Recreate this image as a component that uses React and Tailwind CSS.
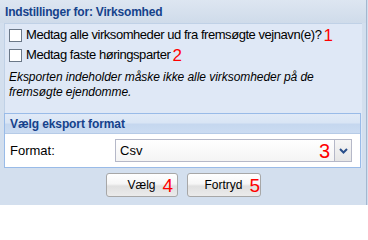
import React from 'react';

const base = { fontFamily: '"Liberation Sans", Arial, sans-serif' };

function Num({ children, className = '' }) {
  return (
    <span className={'text-[#ff0000] leading-none ' + className}>{children}</span>
  );
}

function Check({ label, num }) {
  return (
    <label className="flex items-center h-[20px]">
      <span className="w-[13px] h-[13px] bg-white border border-[#6b7888] shrink-0" />
      <span className="ml-[4px] text-[13px] tracking-[-0.45px] text-black">{label}</span>
      <Num className="ml-[2px] text-[17px]">{num}</Num>
    </label>
  );
}

function Button({ label, num, className = '' }) {
  return (
    <button
      className={
        'h-[24px] rounded-[3px] border border-[#a7a7a7] flex items-center justify-center text-[12px] text-black bg-[linear-gradient(to_bottom,#ffffff_0%,#f6f6f6_45%,#e0e0e0_55%,#ebebeb_100%)] ' +
        className
      }
    >
      <span className="relative">
        {label}
        <Num className="absolute left-full top-1/2 -translate-y-1/2 ml-[7px] text-[19px]">{num}</Num>
      </span>
    </button>
  );
}

export default function App() {
  return (
    <div className="w-[368px] h-[205px] bg-[#d3dfee] overflow-hidden" style={base}>
      <div className="w-[367px] h-[205px] border-r border-[#a3b8d0] flex flex-col">
        <div className="h-[23px] px-[5px] flex items-center bg-[linear-gradient(to_bottom,#dde6f1,#cfdbea)]">
          <span className="text-[12px] font-bold tracking-[-0.2px] text-[#15428b]">Indstillinger for: Virksomhed</span>
        </div>

        <div className="ml-[4px] w-[358px] bg-[#dfe8f6] border-t border-l border-[#c0d1e6] flex flex-col">
          <div className="pl-[4px] pt-[1px] h-[89px]">
            <Check label="Medtag alle virksomheder ud fra fremsøgte vejnavn(e)?" num="1" />
            <Check label="Medtag faste høringsparter" num="2" />
            <p className="mt-[5px] text-[12px] tracking-[-0.05px] italic leading-[15px] text-black">
              Eksporten indeholder måske ikke alle virksomheder på de<br />fremsøgte ejendomme.
            </p>
          </div>

          <div className="w-[357px] -ml-[1px] border border-[#99bbe8] bg-white">
            <div className="h-[20px] px-[5px] flex items-center bg-[linear-gradient(to_bottom,#e1eaf7_0%,#d9e5f5_45%,#c5d7ef_55%,#cbdcf2_100%)] border-b border-[#b6cbe7]">
              <span className="text-[12px] font-bold tracking-[-0.1px] text-[#15428b]">Vælg eksport format</span>
            </div>
            <div className="h-[33px] px-[5px] flex items-center">
              <span className="w-[105px] text-[13px] text-black">Format:</span>
              <div className="flex-1 h-[23px] flex border border-[#b5b8c8] bg-white mr-[3px]">
                <div className="flex-1 flex items-center justify-between pl-[4px] pr-[4px] bg-[linear-gradient(to_bottom,#ffffff,#f4f4f4)]">
                  <span className="text-[13px] text-black">Csv</span>
                  <Num className="text-[20px]">3</Num>
                </div>
                <div className="w-[17px] border-l border-[#b5b8c8] bg-[linear-gradient(to_bottom,#f6f6f6,#e6e6e6)] flex items-center justify-center">
                  <svg width="9" height="6" viewBox="0 0 9 6">
                    <path d="M1 1 L4.5 4.5 L8 1" fill="none" stroke="#2a4f8a" strokeWidth="2" />
                  </svg>
                </div>
              </div>
            </div>
          </div>
        </div>

        <div className="flex justify-center gap-[9px] mt-[5px]">
          <Button label="Vælg" num="4" className="w-[72px]" />
          <Button label="Fortryd" num="5" className="w-[74px]" />
        </div>
      </div>
    </div>
  );
}
